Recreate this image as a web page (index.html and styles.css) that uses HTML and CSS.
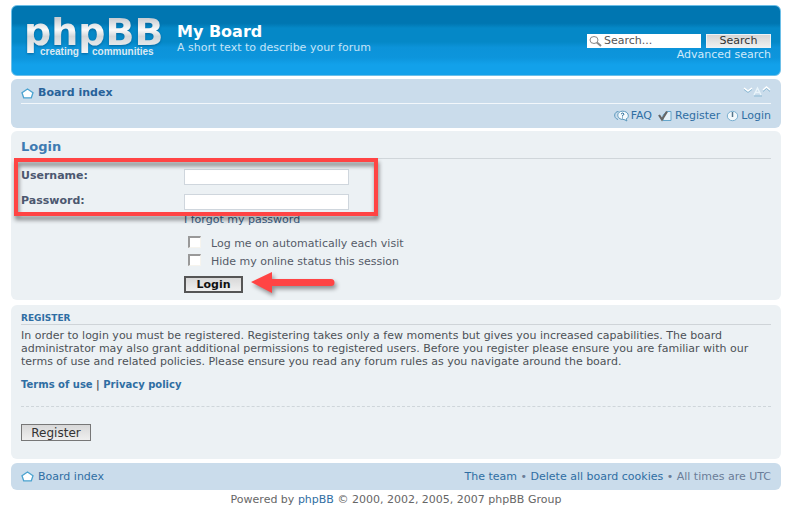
FILE: index.html
```html
<!DOCTYPE html>
<html lang="en">
<head>
<meta charset="utf-8">
<title>My Board - Login</title>
<link rel="stylesheet" href="styles.css">
</head>
<body>
<header class="banner">
  <a class="logo" href="#" aria-label="phpBB creating communities">
    <svg width="146" height="48" viewBox="0 0 146 48">
      <defs>
        <linearGradient id="silver" x1="0" y1="0" x2="0" y2="1">
          <stop offset="0.2" stop-color="#c9ced3"/>
          <stop offset="0.45" stop-color="#fafafa"/>
          <stop offset="0.6" stop-color="#d3d7da"/>
          <stop offset="1" stop-color="#f8f8f8"/>
        </linearGradient>
      </defs>
      <text class="logo-name" x="3" y="33" fill="url(#silver)">phpBB</text>
      <text class="logo-tag" x="19" y="43">creating</text>
      <text class="logo-tag" x="71" y="43">communities</text>
    </svg>
  </a>
  <div class="site">
    <h1>My Board</h1>
    <p>A short text to describe your forum</p>
  </div>
  <form class="search">
    <div class="search-row">
      <div class="search-field">
        <svg width="13" height="13" viewBox="0 0 13 13" fill="none" stroke="#888"><ellipse cx="5" cy="5" rx="4" ry="3.500"/><path d="M8 7.500l4 3.500" stroke-width="2"/></svg>
        <input type="text" value="Search..." aria-label="Search">
      </div>
      <button type="button">Search</button>
    </div>
    <a href="#">Advanced search</a>
  </form>
</header>

<nav class="navbar">
  <div class="crumbs">
    <a class="home" href="#"><svg width="13" height="11" viewBox="0 0 13 11"><path d="M6.500 1L12 4.800 10.300 9.800H2.700L1 4.800Z" fill="#fff" stroke="#4ba3d0" stroke-width="1.300"/></svg><b>Board index</b></a>
    <a class="fontsize" href="#" aria-label="Change font size"><svg width="28" height="10" viewBox="0 0 28 10" fill="none"><path d="M1 2l4 3 4-3M20 4l3.500-3L27 4" stroke="#fff" stroke-width="1.500"/><path d="M1 3.500l4 3 4-3M20 5.500l3.500-3 3.500 3M11 10h8" stroke="#8dbad4"/><path d="M11 9l3.500-7L18 9M12.500 6.500h4" stroke="#e9f4fa" stroke-width="1.400"/></svg></a>
  </div>
  <div class="links">
    <a href="#"><svg width="15" height="12" viewBox="0 0 15 12" fill="none" stroke="#5a98bd"><path d="M4 9.500C-1 8 0 1.500 4.500 1.500"/><path d="M8.500 1.200c7 0 7 7 3.500 7.800l1 2-3-1.500C2 10 2 1.200 8.500 1.200Z" fill="#f4fafd"/><path d="M7 4q2-2 3 0 0 1-1.500 1.500v1M8.500 7.500v1" stroke="#2c6e9a"/></svg>FAQ</a>
    <a href="#"><svg width="15" height="12" viewBox="0 0 15 12" fill="none"><path d="M5 10.500V5L9 1.500h4v9Z" fill="#e7f2f9" stroke="#65a5ca"/><path d="M1 5l3 4.500L9 1.500" stroke="#666" stroke-width="2.200"/></svg>Register</a>
    <a href="#"><svg width="13" height="12" viewBox="0 0 13 12" fill="none"><ellipse cx="6.500" cy="6" rx="5.200" ry="4.700" fill="#f2f8fb" stroke="#79afd0"/><path d="M6.500 2v5" stroke="#55758a" stroke-width="1.500"/></svg>Login</a>
  </div>
</nav>

<main>
  <section class="panel login">
    <h2>Login</h2>
    <form>
      <div class="field"><label for="user">Username:</label><input type="text" id="user"></div>
      <div class="field"><label for="pass">Password:</label><input type="password" id="pass"></div>
      <div class="options">
        <a href="#">I forgot my password</a>
        <label><input type="checkbox">Log me on automatically each visit</label>
        <label><input type="checkbox">Hide my online status this session</label>
        <div class="submit">
          <button type="button">Login</button>
          <svg class="arrow" width="86" height="28" viewBox="0 0 86 28"><path d="M1 11L22 1V8H81a3.500 3.500 0 0 1 0 7H22V22Z" fill="#ff4444"/></svg>
        </div>
      </div>
    </form>
    <div class="highlight"></div>
  </section>

  <section class="panel register">
    <h3>REGISTER</h3>
    <p>In order to login you must be registered. Registering takes only a few moments but gives you increased capabilities. The board administrator may also grant additional permissions to registered users. Before you register please ensure you are familiar with our terms of use and related policies. Please ensure you read any forum rules as you navigate around the board.</p>
    <p class="terms"><a href="#">Terms of use</a> | <a href="#">Privacy policy</a></p>
    <hr>
    <button type="button">Register</button>
  </section>
</main>

<footer>
  <div class="footbar">
    <a class="home" href="#"><svg width="13" height="11" viewBox="0 0 13 11"><path d="M6.500 1L12 4.800 10.300 9.800H2.700L1 4.800Z" fill="#fff" stroke="#4ba3d0" stroke-width="1.300"/></svg>Board index</a>
    <span><a href="#">The team</a> • <a href="#">Delete all board cookies</a> • All times are UTC</span>
  </div>
  <p class="copyright">Powered by <a href="#">phpBB</a> © 2000, 2002, 2005, 2007 phpBB Group</p>
</footer>
</body>
</html>
```
FILE: styles.css
```css
* { box-sizing: border-box; }
body {
  margin: 0;
  padding: 5px 10px 0 11px;
  background: #fff;
  color: #6b7d98;
  font: 11px/14px "DejaVu Sans", Verdana, sans-serif;
}
h1, h2, h3, p { margin: 0; }
a { color: #2f6ea3; text-decoration: none; }
svg { display: block; flex: none; overflow: visible; }
button, input { font: inherit; margin: 0; }
.banner, .navbar, .panel, .footbar { border-radius: 6px; padding: 0 10px; }

.banner {
  display: flex;
  height: 71px;
  border: 1px solid #6cbfe8;
  padding: 0 9px;
  color: #fff;
  background: linear-gradient(#0076b1 25%, #0588c7 32%, #0588c7 52%, #0c93d9 60%, #0d95dc 75%, #12a1ea 85%);
}
.logo { padding-top: 6px; }
.logo-name { font: bold 38px "DejaVu Sans", sans-serif; filter: drop-shadow(0 1px 1px #0568a0); }
.logo-tag { font: bold 10px "Liberation Sans", sans-serif; fill: #dbe9f2; }
.site { flex: 1; padding: 16px 0 0 10px; }
.site h1 { font-size: 16px; line-height: 19px; }
.site p { line-height: 13px; color: #c5e4f6; }
.search { padding-top: 28px; text-align: right; }
.search a { display: block; color: #cfeafa; line-height: 13px; }
.search-row { display: flex; gap: 5px; }
.search-field { display: flex; align-items: center; background: #fff; height: 14px; width: 114px; padding-left: 2px; }
.search-field input { width: 98px; height: 14px; border: 0; padding: 0 2px; background: none; color: #555; }
.search button { width: 65px; height: 14px; padding: 0; line-height: 12px; border: 1px solid #eef2f5; background: linear-gradient(#d5d5d5, #efefef); color: #333; }

.navbar { margin-top: 3px; height: 49px; background: #cadceb; }
.crumbs { display: flex; justify-content: space-between; height: 25px; padding-top: 7px; border-bottom: 1px solid #f2f7fb; }
.home { display: flex; gap: 4px; height: 14px; align-items: center; }
.crumbs b { color: #28639a; }
.links { display: flex; justify-content: flex-end; gap: 6px; padding-top: 5px; }
.links a { display: flex; align-items: center; gap: 2px; }

.panel { margin-top: 4px; background: #ecf1f4; }
.login { position: relative; height: 169px; margin-top: 3px; padding-top: 8px; }
.login h2 { font-size: 13px; line-height: 16px; padding-bottom: 3px; color: #3e7bb2; border-bottom: 1px solid #d0d6da; }
.login form { padding-top: 10px; }
.field { display: flex; height: 25px; }
.field label { width: 163px; line-height: 14px; font-weight: bold; color: #4c5870; }
.field input { width: 165px; height: 16px; border: 1px solid #cfd6dd; background: #fff; padding: 0 2px; }
.options { padding-left: 163px; }
.options > a { display: block; margin-top: -6px; color: #3d5f86; }
.options label { display: flex; align-items: center; gap: 10px; height: 18px; padding-left: 4px; color: #555b68; }
.options > a + label { margin-top: 8px; }
.options input { appearance: none; width: 13px; height: 12px; margin-bottom: 5px; background: #fff; border: 1px solid #f6f4ee; border-top: 2px solid #999; border-left: 2px solid #999; }
.submit { display: flex; gap: 7px; padding-top: 5px; height: 22px; }
.submit button { width: 59px; height: 17px; padding: 0; line-height: 13px; font-weight: bold; color: #111; border: 2px solid #555; background: linear-gradient(#d8d8d8, #efefef); }
.arrow { margin-top: -5px; filter: drop-shadow(2px 3px 2px rgba(0, 0, 0, .4)); }
.highlight { position: absolute; left: 3px; top: 27px; width: 364px; height: 58px; border: 4px solid #ff4444; filter: drop-shadow(1px 4px 2px rgba(0, 0, 0, .45)); pointer-events: none; }

.register { margin-top: 5px; height: 154px; padding-top: 7px; }
.register h3 { font-size: 9px; line-height: 12px; color: #2f6ea3; border-bottom: 1px solid #cfd4d8; margin-bottom: 4px; }
.register p { line-height: 13px; color: #4c5157; }
.register .terms { margin-top: 10px; font-size: 10px; font-weight: bold; }
.register hr { margin: 15px 0 17px; border: 0; border-top: 1px dashed #cfd6da; }
.register button { width: 70px; height: 17px; padding: 0; font-size: 12px; line-height: 14px; color: #333; border: 1px solid #777; background: linear-gradient(#d8d8d8, #efefef); }

.footbar { display: flex; justify-content: space-between; align-items: center; height: 27px; margin-top: 4px; background: #cadceb; }
.copyright { padding-top: 3px; text-align: center; color: #666; }
```
